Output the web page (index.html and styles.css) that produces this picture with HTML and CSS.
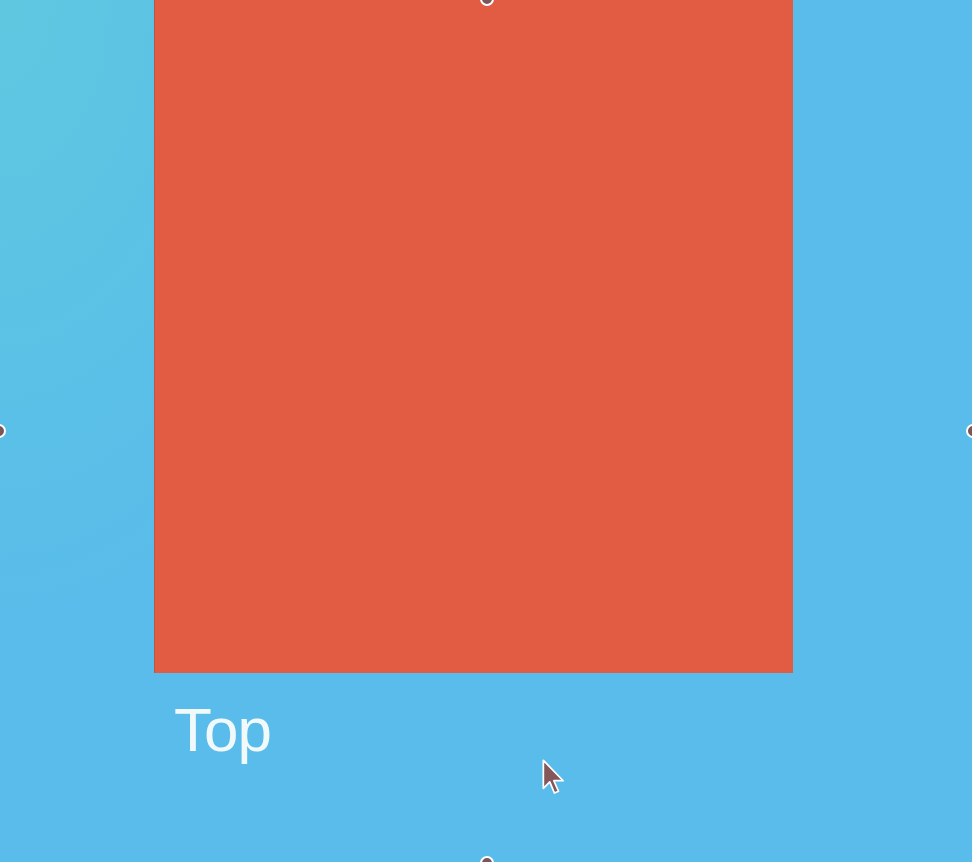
FILE: index.html
```html
<!DOCTYPE html>
<html lang="en">
  <head>
    <meta charset="UTF-8" />
    <title>Top</title>
    <link rel="stylesheet" href="styles.css">
  </head>
  <body>
    <div class="stage">
      <div class="panel"></div>
      <p class="caption">Top</p>

      <span class="handle handle-top"></span>
      <span class="handle handle-left"></span>
      <span class="handle handle-right"></span>
      <span class="handle handle-bottom"></span>

      <svg class="cursor" width="28" height="40" viewBox="0 0 24 34.3">
        <path d="M2 2 L2 26 L7.5 20.5 L11.5 30 L15 28.5 L11 19.5 L19 19.5 Z"
              fill="#85575b" stroke="#ffffff" stroke-width="1.5" stroke-linejoin="round" />
      </svg>
    </div>
  </body>
</html>
```

FILE: styles.css
```css
html, body {
  margin: 0;
  height: 100%;
}

body {
  background-color: #59bcea;
  overflow: hidden;
}

.stage {
  position: relative;
  height: 862px;
  background:
    radial-gradient(ellipse 380px 620px at 0 0, rgba(96, 202, 222, 0.85), rgba(96, 202, 222, 0) 100%),
    #59bcea;
}

.panel {
  margin-left: 154px;
  width: 639px;
  height: 673px;
  background-color: #e25b43;
  border-left: 1px solid #b8564a;
  box-sizing: border-box;
}

.caption {
  margin: 0;
  padding: 26px 0 0 174px;
  font-family: "Liberation Sans", Arial, sans-serif;
  font-size: 62px;
  line-height: 1;
  color: #f1f9fb;
  letter-spacing: -1px;
}

.handle {
  --size: 14px;
  position: absolute;
  width: var(--size);
  height: var(--size);
  border-radius: 50%;
  background-color: #7a5659;
  border: 2px solid #ffffff;
  box-sizing: border-box;
}

.handle-top {
  top: -8px;
  left: 480px;
}

.handle-bottom {
  bottom: -8px;
  left: 480px;
}

.handle-left {
  top: 424px;
  left: -8px;
}

.handle-right {
  top: 424px;
  right: -8px;
}

.cursor {
  position: absolute;
  left: 541px;
  top: 758px;
}
```
